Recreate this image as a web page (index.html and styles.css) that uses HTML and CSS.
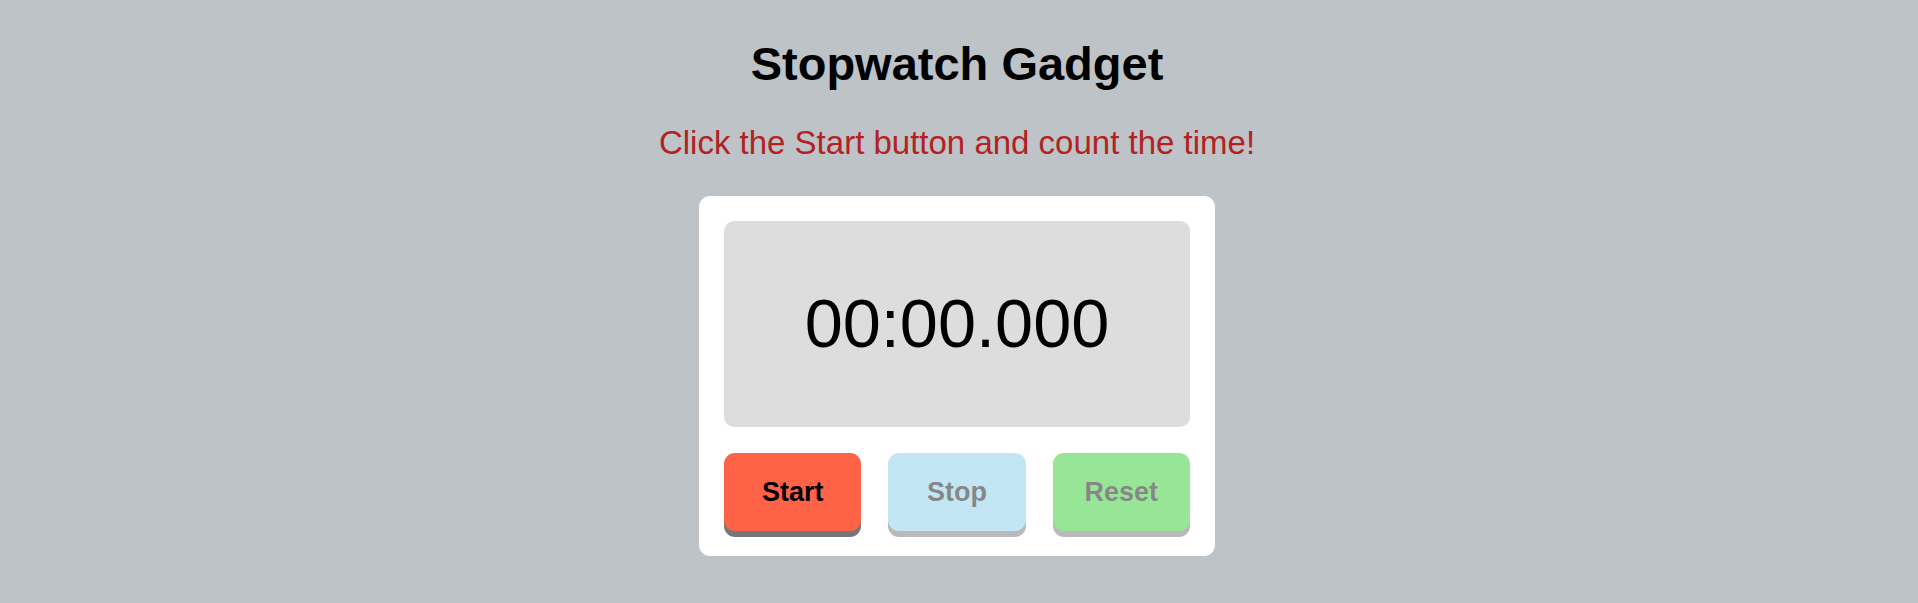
FILE: index.html
```html
<!DOCTYPE html>
<html lang="en">
<head>
<meta charset="utf-8">
<title>Stopwatch Gadget</title>
<link rel="stylesheet" href="styles.css">
</head>
<body>
<main class="page">
  <h1 class="title">Stopwatch Gadget</h1>
  <p class="subtitle">Click the Start button and count the time!</p>
  <section class="card">
    <div class="display">00:00.000</div>
    <div class="controls">
      <button class="btn btn-start" type="button">Start</button>
      <button class="btn btn-stop" type="button" disabled>Stop</button>
      <button class="btn btn-reset" type="button" disabled>Reset</button>
    </div>
  </section>
</main>
</body>
</html>
```

FILE: styles.css
```css
html, body {
  margin: 0;
  padding: 0;
  background: #bdc3c7;
}

body {
  font-family: "Liberation Sans", Arial, sans-serif;
  color: #000;
}

.page {
  display: flex;
  flex-direction: column;
  align-items: center;
  padding-top: 38px;
  padding-right: 4px;
}

.title {
  margin: 0;
  font-size: 47px;
  line-height: 52px;
  font-weight: bold;
  color: #000;
}

.subtitle {
  margin: 34px 0 0;
  font-size: 33px;
  line-height: 38px;
  color: #b22222;
}

.card {
  margin-top: 34px;
  width: 466px;
  padding: 25px;
  background: #fff;
  border-radius: 11px;
}

.display {
  height: 206px;
  display: flex;
  align-items: center;
  justify-content: center;
  background: #dddddd;
  border-radius: 10px;
  font-size: 68.5px;
  line-height: 1;
  color: #000;
}

.controls {
  margin-top: 26px;
  display: grid;
  grid-template-columns: repeat(3, 1fr);
  column-gap: 27px;
}

.btn {
  height: 78px;
  border: none;
  border-radius: 11px;
  box-shadow: 0 6px 0 #777;
  font-family: "Liberation Sans", Arial, sans-serif;
  font-size: 27px;
  font-weight: bold;
  color: #000;
  padding: 0;
  cursor: pointer;
}

.btn-start {
  background: #ff6347;
}

.btn-stop {
  background: #87ceeb;
}

.btn-reset {
  background: #32cd32;
}

.btn:disabled {
  opacity: 0.5;
  color: #111;
  cursor: default;
}
```
